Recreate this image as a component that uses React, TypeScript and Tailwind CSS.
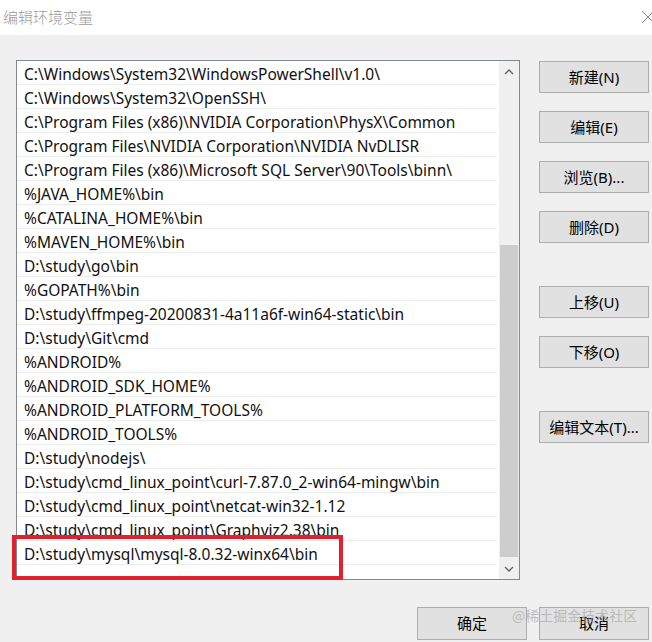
import React from 'react'

const PATHS = [
  'C:\\Windows\\System32\\WindowsPowerShell\\v1.0\\',
  'C:\\Windows\\System32\\OpenSSH\\',
  'C:\\Program Files (x86)\\NVIDIA Corporation\\PhysX\\Common',
  'C:\\Program Files\\NVIDIA Corporation\\NVIDIA NvDLISR',
  'C:\\Program Files (x86)\\Microsoft SQL Server\\90\\Tools\\binn\\',
  '%JAVA_HOME%\\bin',
  '%CATALINA_HOME%\\bin',
  '%MAVEN_HOME%\\bin',
  'D:\\study\\go\\bin',
  '%GOPATH%\\bin',
  'D:\\study\\ffmpeg-20200831-4a11a6f-win64-static\\bin',
  'D:\\study\\Git\\cmd',
  '%ANDROID%',
  '%ANDROID_SDK_HOME%',
  '%ANDROID_PLATFORM_TOOLS%',
  '%ANDROID_TOOLS%',
  'D:\\study\\nodejs\\',
  'D:\\study\\cmd_linux_point\\curl-7.87.0_2-win64-mingw\\bin',
  'D:\\study\\cmd_linux_point\\netcat-win32-1.12',
  'D:\\study\\cmd_linux_point\\Graphviz2.38\\bin',
  'D:\\study\\mysql\\mysql-8.0.32-winx64\\bin',
]

const FONT = "font-['Segoe_UI','Noto_Sans','Noto_Sans_CJK_SC',sans-serif]"

function Btn({ label, className = '' }: { label: string; className?: string }) {
  return (
    <div
      className={`flex h-[32px] w-[110px] items-center justify-center border border-[#adadad] bg-[#e1e1e1] text-[15px] text-black ${className}`}
    >
      {label}
    </div>
  )
}

function Chevron({ up }: { up?: boolean }) {
  return (
    <svg width="10" height="6" viewBox="0 0 10 6" className="text-[#606060]">
      <path d={up ? 'M1 5 L5 1 L9 5' : 'M1 1 L5 5 L9 1'} fill="none" stroke="currentColor" strokeWidth="1.3" />
    </svg>
  )
}

export default function App() {
  return (
    <div className={`relative flex h-[642px] w-[652px] flex-col overflow-hidden bg-[#f0f0f0] ${FONT}`}>
      {/* ── Title bar ── */}
      <div className="flex h-[35px] shrink-0 items-center justify-between bg-white pl-[3px]">
        <span className="font-['Noto_Sans_CJK_SC',sans-serif] text-[15px] font-light text-[#9a9a9a]">编辑环境变量</span>
        <svg width="14" height="14" viewBox="0 0 14 14" className="mr-[-3px] mt-[-2px]">
          <path d="M1 1 L13 13 M13 1 L1 13" stroke="#8a8a8a" strokeWidth="1" />
        </svg>
      </div>

      {/* ── Content ── */}
      <div className="flex pl-[16px] pt-[25px]">
        {/* list box */}
        <div className="flex h-[520px] w-[504px] border border-[#828790] bg-white">
          <div className="flex w-[480px] flex-col">
            {PATHS.map(p => (
              <div
                key={p}
                className="flex h-[24px] shrink-0 items-center border-b border-[#ececec] pl-[7px] pt-[5px] text-[15.5px] leading-none text-[#111]"
              >
                <span className="whitespace-nowrap">{p}</span>
              </div>
            ))}
          </div>
          {/* scrollbar */}
          <div className="ml-[2px] flex w-[20px] flex-col bg-[#f0f0f0]">
            <div className="flex h-[22px] items-center justify-center">
              <Chevron up />
            </div>
            <div className="h-[162px]" />
            <div className="mx-[1px] h-[312px] bg-[#cdcdcd]" />
            <div className="flex flex-1 items-center justify-center pt-[1px]">
              <Chevron />
            </div>
          </div>
        </div>

        {/* side buttons */}
        <div className="ml-[19px] flex flex-col pt-[1px]">
          <Btn label="新建(N)" />
          <Btn label="编辑(E)" className="mt-[18px]" />
          <Btn label="浏览(B)..." className="mt-[18px]" />
          <Btn label="删除(D)" className="mt-[18px]" />
          <Btn label="上移(U)" className="mt-[43px]" />
          <Btn label="下移(O)" className="mt-[18px]" />
          <Btn label="编辑文本(T)..." className="mt-[43px]" />
        </div>
      </div>

      {/* ── Bottom buttons ── */}
      <div className="mt-[27px] flex justify-end gap-[12px] pr-[3px]">
        <Btn label="确定" className="h-[33px]" />
        <Btn label="取消" className="h-[33px]" />
      </div>

      {/* red highlight */}
      <div className="absolute left-[12px] top-[535px] h-[45px] w-[331px] border-[4px] border-[#e0202c]" />

      {/* watermark */}
      <div className="absolute left-[512px] top-[605px] font-['Noto_Sans_CJK_SC',sans-serif] text-[14px] text-[#a8a8a8]/70">
        @稀土掘金技术社区
      </div>
    </div>
  )
}
